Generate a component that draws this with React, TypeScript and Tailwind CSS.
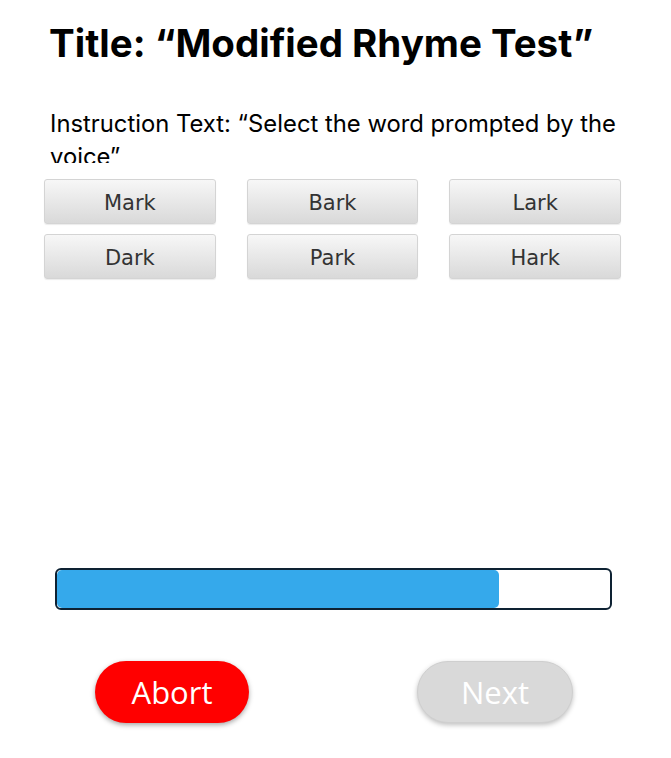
import React from 'react';

const words = ['Mark', 'Bark', 'Lark', 'Dark', 'Park', 'Hark'];

export default function App() {
  const progress = 80;

  return (
    <div className="w-[671px] h-[758px] bg-white overflow-hidden font-['Inter',sans-serif]">
      {/* Title */}
      <h1 className="pl-[49px] pt-[20px] text-[38.5px] leading-[46px] font-bold text-black whitespace-nowrap">
        Title: “Modified Rhyme Test”
      </h1>

      {/* Instruction */}
      <div className="mt-[41px] pl-[50px] pr-[30px] h-[56px] overflow-hidden">
        <p className="text-[23.8px] leading-[33px] text-black">
          Instruction Text: “Select the word prompted by the voice”
        </p>
      </div>

      {/* Word choices */}
      <div className="grid grid-cols-3 gap-x-[31px] gap-y-[10px] px-[44px] mt-[16px] w-[665px]">
        {words.map(w => (
          <button
            key={w}
            className="h-[45px] pt-[4px] rounded-[3px] border border-[#d4d4d4] bg-gradient-to-b from-[#f7f7f7] to-[#d9d9d9] text-[21px] text-[#333] font-['DejaVu_Sans',sans-serif] shadow-[0_1px_1px_rgba(0,0,0,0.08)]"
          >
            {w}
          </button>
        ))}
      </div>

      {/* Progress */}
      <div className="mt-[289px] ml-[55px] w-[557px] h-[42px] rounded-[6px] border-2 border-[#0e2233] overflow-hidden">
        <div className="h-full bg-[#35a9eb] rounded-[5px]" style={{ width: `${progress}%` }} />
      </div>

      {/* Actions */}
      <div className="flex justify-between mt-[51px] pl-[95px] pr-[98px]">
        <button className="w-[154px] h-[62px] rounded-full bg-[#ff0000] text-white text-[31px] font-['Open_Sans',sans-serif] shadow-[0_2px_5px_rgba(0,0,0,0.35)]">
          Abort
        </button>
        <button className="w-[156px] h-[62px] rounded-full bg-[#d9d9d9] text-white text-[31px] font-['Open_Sans',sans-serif] border border-[#cfcfcf] shadow-[0_2px_5px_rgba(0,0,0,0.25)]">
          Next
        </button>
      </div>
    </div>
  );
}
